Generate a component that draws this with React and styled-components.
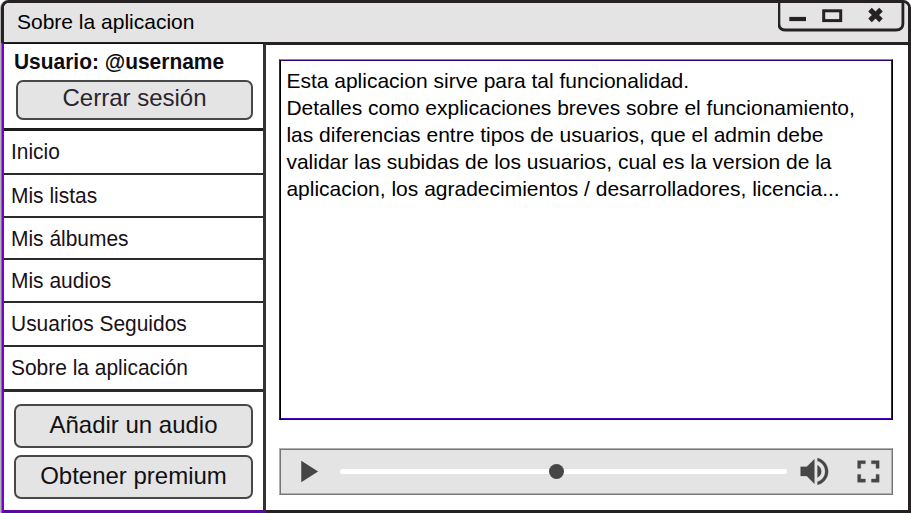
import React from "react";
import styled, { createGlobalStyle } from "styled-components";

const Global = createGlobalStyle`
  * { box-sizing: border-box; }
  html, body { margin: 0; padding: 0; background: #fff; }
  body { font-family: "Liberation Sans", Arial, sans-serif; color: #000; overflow: hidden; }
`;

const Window = styled.div`
  width: 910px;
  height: 513px;
  margin-left: 1px;
  display: flex;
  flex-direction: column;
  border: 3px solid #262223;
  border-radius: 8px 8px 0 0;
  background: #fff;
  box-shadow: -1px 0 #b4b4b4;
`;

const TitleBar = styled.header`
  height: 42px;
  flex: none;
  display: flex;
  justify-content: space-between;
  align-items: flex-start;
  padding: 0 2px 0 13px;
  background: #e4e4e4;
  border-bottom: 3px solid #262223;
  border-radius: 5px 5px 0 0;
`;

const Title = styled.h1`
  margin: 0;
  font-size: 21px;
  font-weight: 400;
  line-height: 38px;
  white-space: nowrap;
`;

const WindowControls = styled.svg`
  display: block;
  width: 128px;
  height: 30px;
`;

const Body = styled.div`
  flex: 1;
  min-height: 0;
  display: flex;
`;

const Sidebar = styled.aside`
  flex: none;
  width: 264px;
  margin: -2px 0 -3px -2px;
  display: flex;
  flex-direction: column;
  border-left: 2px solid #7800d2;
  border-bottom: 3px solid #5a0a9c;
  border-top: 1px solid #111;
  border-right: 3px solid #333;
  box-shadow: -1px 0 #777;
  background: #fff;
`;

const UserPanel = styled.section`
  height: 87px;
  flex: none;
  padding: 4px 10px 0 12px;
  border-bottom: 3px solid #1c1c1c;
`;

const UserName = styled.div`
  height: 32px;
  margin-left: -2px;
  font-size: 21.5px;
  font-weight: 700;
  line-height: 29px;
  white-space: nowrap;
  transform: scaleX(0.974);
  transform-origin: 0 0;
  color: #0c0c12;
`;

const Button = styled.button`
  display: block;
  width: 100%;
  height: ${(p) => p.$height}px;
  padding: 0 0 ${(p) => p.$lift}px;
  border: 2px solid #484848;
  border-radius: 7px;
  background: #e4e4e4;
  color: ${(p) => p.$color || "#111"};
  font: 24px/28px "Liberation Sans", Arial, sans-serif;
`;

const Nav = styled.nav`
  flex: none;
  display: grid;
  grid-template-rows: 44px 43px 42px 43px 44px 45px;
`;

const NavItem = styled.a`
  padding-left: 7px;
  border-bottom: ${(p) => (p.$last ? 3 : 2)}px solid #2b2b2b;
  font-size: 22px;
  line-height: 41px;
  white-space: nowrap;
  color: #1a1018;

  span {
    display: inline-block;
    transform: scaleX(0.952);
    transform-origin: 0 0;
  }
`;

const Actions = styled.section`
  display: flex;
  flex-direction: column;
  gap: 7px;
  padding: 12px 10px 0 10px;
`;

const Main = styled.main`
  flex: 1;
  display: flex;
  flex-direction: column;
  gap: 28px;
  padding: 14px 15px 0 13px;
`;

const TextPanel = styled.section`
  height: 361px;
  flex: none;
  border: 1px solid;
  border-color: #9a7ad0 #000 #000 #5500c8;
  box-shadow: inset 1px 0 #000, inset 0 1px #2c006e, inset -1px 0 #5500c8, inset 0 -1px #5500c8;
  padding: 7px 0 0 6.4px;
  font-size: 21px;
  line-height: 27px;
  white-space: nowrap;
`;

const Line = styled.p`
  margin: 0;
`;

const Player = styled.section`
  height: 47px;
  flex: none;
  display: flex;
  align-items: center;
  padding-left: 9px;
  border: 1px solid;
  border-color: #b0b0b0 #767676 #767676 #b0b0b0;
  box-shadow: inset 1px 1px #767676, inset -1px -1px #b0b0b0;
  background: #e4e4e4;
`;

const Icon = styled.svg`
  flex: none;
  width: 36.8px;
  height: 36.8px;
  margin-left: ${(p) => p.$gap || 0}px;
  fill: #464646;
`;

const Track = styled.div`
  position: relative;
  flex: none;
  width: 447px;
  height: 5px;
  margin-left: 14.2px;
  border-radius: 3px;
  background: #fff;
`;

const Knob = styled.div`
  position: absolute;
  left: 208.8px;
  top: -5px;
  width: 15px;
  height: 15px;
  border-radius: 50%;
  background: #464646;
`;

const navItems = [
  "Inicio",
  "Mis listas",
  "Mis álbumes",
  "Mis audios",
  "Usuarios Seguidos",
  "Sobre la aplicación",
];

const lines = [
  "Esta aplicacion sirve para tal funcionalidad.",
  "Detalles como explicaciones breves sobre el funcionamiento,",
  "las diferencias entre tipos de usuarios, que el admin debe",
  "validar las subidas de los usuarios, cual es la version de la",
  "aplicacion, los agradecimientos / desarrolladores, licencia...",
];

export default function App() {
  return (
    <>
      <Global />
      <Window>
        <TitleBar>
          <Title>Sobre la aplicacion</Title>
          <WindowControls viewBox="0 0 128 30" fill="none" stroke="#262223">
            <path d="M0.9 0V20.5Q0.9 27 7.4 27H118Q124.9 27 124.9 20.5V0" strokeWidth="2.8" />
            <path d="M11.3 16H28" strokeWidth="4.2" />
            <rect x="45.7" y="7.8" width="17" height="9.8" strokeWidth="3" />
            <path d="M92 6.6L103 17.4M103 6.6L92 17.4" strokeWidth="5" />
          </WindowControls>
        </TitleBar>
        <Body>
          <Sidebar>
            <UserPanel>
              <UserName>Usuario: @username</UserName>
              <Button $height={40} $lift={4} $color="#2b2430">Cerrar sesión</Button>
            </UserPanel>
            <Nav>
              {navItems.map((label, i) => (
                <NavItem key={label} $last={i === navItems.length - 1}>
                  <span>{label}</span>
                </NavItem>
              ))}
            </Nav>
            <Actions>
              <Button $height={44} $lift={2}>Añadir un audio</Button>
              <Button $height={44} $lift={2}>Obtener premium</Button>
            </Actions>
          </Sidebar>
          <Main>
            <TextPanel>
              {lines.map((line) => (
                <Line key={line}>{line}</Line>
              ))}
            </TextPanel>
            <Player>
              <Icon viewBox="0 0 24 24">
                <path d="M8 5v14l11-7z" />
              </Icon>
              <Track>
                <Knob />
              </Track>
              <Icon viewBox="0 0 24 24" $gap={8.6}>
                <path
                  d="M3 9v6h4l5 5V4L7 9H3zm13.5 3c0-1.77-1.02-3.29-2.5-4.03v8.05c1.48-.73 2.5-2.25 2.5-4.02zM14 3.23v2.06c2.89.86 5 3.54 5 6.71s-2.11 5.85-5 6.71v2.06c4.01-.91 7-4.49 7-8.77s-2.99-7.86-7-8.77z"
                  stroke="#464646"
                  strokeWidth="0.15"
                />
              </Icon>
              <Icon viewBox="0 0 24 24" $gap={17.8}>
                <path d="M7 14H5v5h5v-2H7v-3zm-2-4h2V7h3V5H5v5zm12 7h-3v2h5v-5h-2v3zM14 5v2h3v3h2V5h-5z" stroke="#464646" strokeWidth="0.25" />
              </Icon>
            </Player>
          </Main>
        </Body>
      </Window>
    </>
  );
}
